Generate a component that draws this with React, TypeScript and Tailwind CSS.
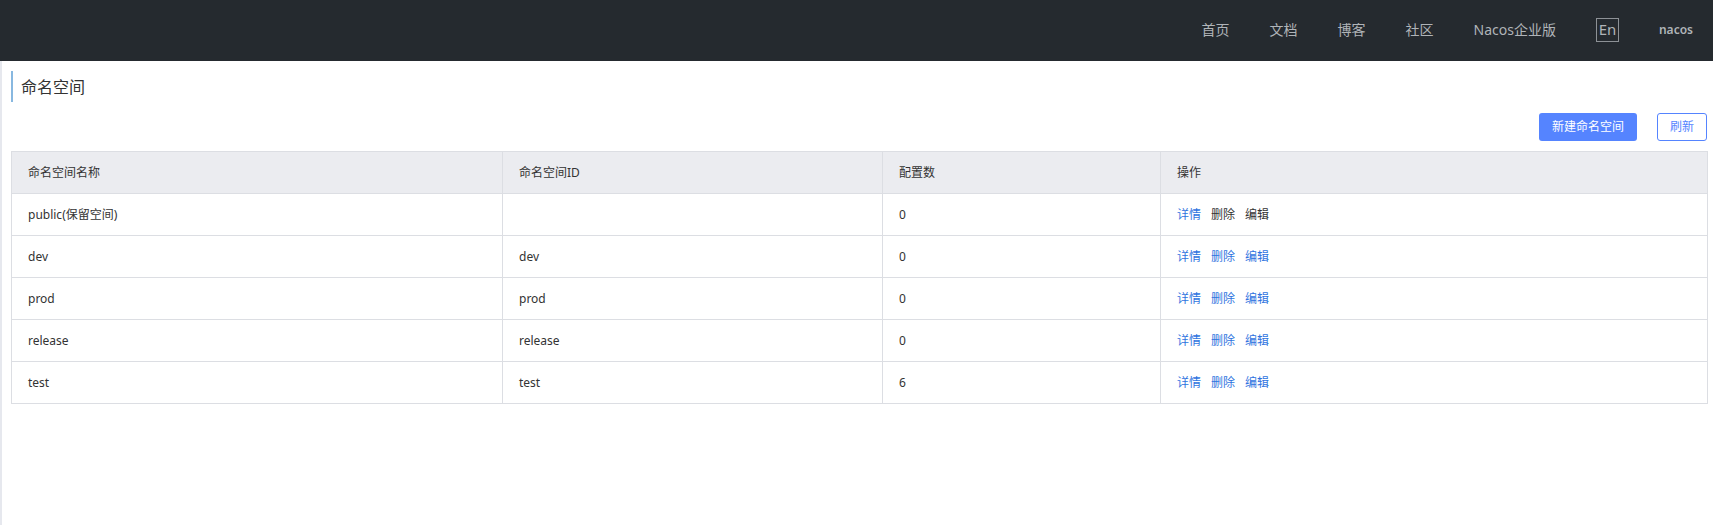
import React from 'react'

const navItems = ['首页', '文档', '博客', '社区', 'Nacos企业版']

const rows = [
  { name: 'public(保留空间)', id: '', count: 0, reserved: true },
  { name: 'dev', id: 'dev', count: 0, reserved: false },
  { name: 'prod', id: 'prod', count: 0, reserved: false },
  { name: 'release', id: 'release', count: 0, reserved: false },
  { name: 'test', id: 'test', count: 6, reserved: false },
]

export default function App() {
  return (
    <div
      className="min-h-[525px] bg-white text-[#333]"
      style={{ fontFamily: '"Noto Sans", "Noto Sans CJK SC", sans-serif' }}
    >
      {/* Top nav */}
      <header className="flex h-[61px] items-center justify-end gap-[40px] bg-[#252a2f] pb-[2px] pr-[20px] text-[14px] text-[#b0b4b8]">
        {navItems.map((item) => (
          <a key={item} className="cursor-pointer leading-none">
            {item}
          </a>
        ))}
        <span className="flex h-[24px] w-[23px] items-center justify-center border border-[#8d9196] text-[15px] leading-none">
          En
        </span>
        <span className="text-[12px] font-semibold leading-none">nacos</span>
      </header>

      <div className="flex">
        {/* left rail */}
        <div className="min-h-[464px] w-[2px] bg-[#e6e8ee]" />

        <main className="flex-1 pl-[9px] pr-[5px]">
          {/* page title */}
          <div className="mt-[10px] flex h-[31px] items-center border-l-2 border-[#88b8e0] pl-[8px] text-[16px] leading-none">
            命名空间
          </div>

          {/* actions */}
          <div className="mt-[11px] flex justify-end gap-[20px] text-[12px]">
            <button className="h-[28px] rounded-[3px] bg-[#5584ff] px-[13px] text-white">
              新建命名空间
            </button>
            <button className="mr-[1px] h-[28px] rounded-[3px] border border-[#5584ff] bg-white px-[12px] text-[#5584ff]">
              刷新
            </button>
          </div>

          {/* table */}
          <table className="mt-[10px] w-full table-fixed border-collapse border border-[#dcdee3] text-[12px]">
            <colgroup>
              <col className="w-[491px]" />
              <col className="w-[380px]" />
              <col className="w-[278px]" />
              <col />
            </colgroup>
            <thead>
              <tr className="h-[42px] bg-[#ebecf0] text-left">
                <th className="border border-[#dcdee3] px-[16px] font-normal">命名空间名称</th>
                <th className="border border-[#dcdee3] px-[16px] font-normal">命名空间ID</th>
                <th className="border border-[#dcdee3] px-[16px] font-normal">配置数</th>
                <th className="border border-[#dcdee3] px-[16px] font-normal">操作</th>
              </tr>
            </thead>
            <tbody>
              {rows.map((r) => (
                <tr key={r.name} className="h-[42px]">
                  <td className="border border-[#dcdee3] px-[16px]">{r.name}</td>
                  <td className="border border-[#dcdee3] px-[16px]">{r.id}</td>
                  <td className="border border-[#dcdee3] px-[16px]">{r.count}</td>
                  <td className="border border-[#dcdee3] px-[16px]">
                    <div className="flex gap-[10px]">
                      <a className="cursor-pointer text-[#2f74e0]">详情</a>
                      <a className={r.reserved ? 'text-[#333]' : 'cursor-pointer text-[#2f74e0]'}>删除</a>
                      <a className={r.reserved ? 'text-[#333]' : 'cursor-pointer text-[#2f74e0]'}>编辑</a>
                    </div>
                  </td>
                </tr>
              ))}
            </tbody>
          </table>
        </main>
      </div>
    </div>
  )
}
